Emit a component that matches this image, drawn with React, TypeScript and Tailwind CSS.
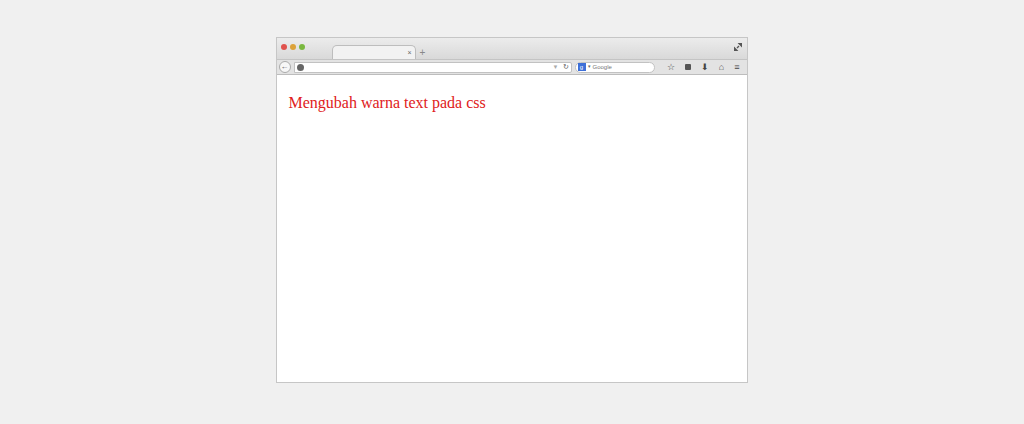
export default function App() {
  return (
    <div className="w-[1024px] h-[424px] bg-[#f0f0f0] pt-[37px] flex justify-center" style={{ fontFamily: '"Liberation Sans", sans-serif' }}>
      <div className="w-[472px] h-[346px] border border-[#c6c6c6] bg-white flex flex-col ml-[-1px]">
        <div className="h-[21px] bg-gradient-to-b from-[#ececec] to-[#d9d9d9] flex items-end relative">
          <div className="absolute left-[4px] top-[6px] flex gap-[3px]">
            <div className="w-[6px] h-[6px] rounded-full bg-[#e0524d]" />
            <div className="w-[6px] h-[6px] rounded-full bg-[#dca23a]" />
            <div className="w-[6px] h-[6px] rounded-full bg-[#7ab83f]" />
          </div>
          <div className="ml-[55px] w-[84px] h-[14px] bg-[#f2f2f2] rounded-t-[5px] border border-b-0 border-[#bdbdbd] flex items-center justify-end pr-[3px]">
            <span className="text-[7px] text-[#666] leading-none">×</span>
          </div>
          <span className="ml-[4px] mb-[1px] text-[10px] text-[#888] leading-none">+</span>
          <svg className="absolute right-[5px] top-[5px]" width="8" height="8" viewBox="0 0 8 8"><path d="M4.5 0H8V3.5ZM3.5 8H0V4.5ZM3 5L5 3" stroke="#555" strokeWidth="1.3" fill="#555" /></svg>
        </div>
        <div className="h-[16px] bg-[#e3e3e3] border-t border-[#c4c4c4] border-b border-b-[#bdbdbd] flex items-center px-[2px] gap-[3px]">
          <div className="w-[12px] h-[12px] rounded-full border border-[#aaa] bg-[#f7f7f7] flex items-center justify-center text-[8px] text-[#555] leading-none">←</div>
          <div className="w-[278px] h-[11px] bg-white border border-[#c2c2c2] rounded-r-[2px] flex items-center px-[2px] gap-1">
            <div className="w-[7px] h-[7px] rounded-full bg-[#666]" />
            <div className="flex-1" />
            <span className="text-[6px] text-[#aaa]">▼</span>
            <span className="text-[7px] text-[#555]">↻</span>
          </div>
          <div className="w-[80px] h-[11px] bg-white border border-[#c2c2c2] rounded-full flex items-center px-[2px] gap-[2px]">
            <div className="w-[8px] h-[8px] bg-[#3d6fd8] text-white text-[6px] leading-[8px] text-center">g</div>
            <span className="text-[5px] text-[#666]">▾</span>
            <span className="text-[6px] text-[#777] leading-none">Google</span>
          </div>
          <div className="flex-1 flex justify-around items-center text-[#444] text-[9px] leading-none pl-[4px]">
            <span>☆</span>
            <span className="w-[6px] h-[6px] bg-[#555] rounded-[1px]" />
            <span>⬇</span>
            <span>⌂</span>
            <span>≡</span>
          </div>
        </div>
        <div className="flex-1 bg-white px-[12px] pt-[16px]">
          <p className="text-[16px] text-[#e02020]" style={{ fontFamily: '"Liberation Serif", serif' }}>Mengubah warna text pada css</p>
        </div>
      </div>
    </div>
  );
}
